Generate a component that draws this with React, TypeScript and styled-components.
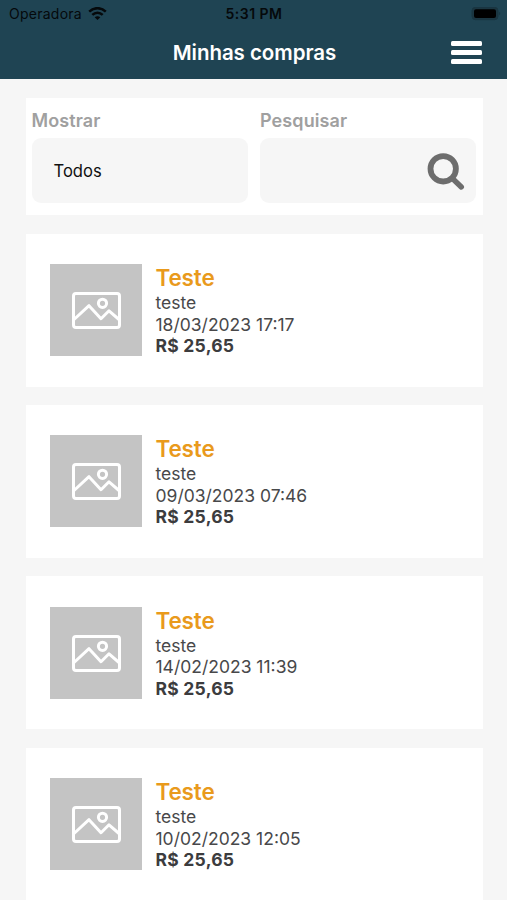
import React from "react";
import styled, { createGlobalStyle } from "styled-components";

const GlobalStyle = createGlobalStyle`
  * { box-sizing: border-box; }
  html, body { margin: 0; padding: 0; background: #f6f6f6; overflow: hidden; }
  body { font-family: Inter, "Liberation Sans", sans-serif; }
`;

const Screen = styled.div`
  width: 507px;
  height: 900px;
  overflow: hidden;
  background: #f6f6f6;
`;

const Header = styled.header`
  height: 79px;
  background: #1f4453;
`;

const StatusBar = styled.div`
  display: grid;
  grid-template-columns: 1fr auto 1fr;
  align-items: center;
  height: 27px;
  padding: 0 6px 0 9px;
  color: #05090b;
`;

const Carrier = styled.div`
  display: flex;
  align-items: center;
  gap: 6px;
  font-size: 14px;
  line-height: 27px;
  letter-spacing: 0.25px;
`;

const Clock = styled.div`
  margin-right: 2px;
  font-size: 14px;
  font-weight: 600;
  line-height: 27px;
  letter-spacing: 0.5px;
`;

const BatteryIcon = styled.svg`
  display: block;
  justify-self: end;
`;

const NavBar = styled.div`
  display: grid;
  grid-template-columns: 1fr auto 1fr;
  align-items: center;
  height: 50px;
  padding: 0 25px;
`;

const Title = styled.h1`
  grid-column: 2;
  margin: 0;
  padding-left: 2px;
  color: #fff;
  font-size: 20.5px;
  font-weight: 600;
  line-height: 51px;
  letter-spacing: -0.05px;
`;

const MenuButton = styled.button`
  display: flex;
  flex-direction: column;
  justify-self: end;
  gap: 4px;
  padding: 0;
  border: 0;
  background: none;
`;

const MenuLine = styled.span`
  width: 31px;
  height: 5px;
  border-radius: 1.5px;
  background: #fff;
`;

const Content = styled.main`
  display: flex;
  flex-direction: column;
  gap: 18.4px;
  padding: 19px 24px 0 25.5px;
`;

const Filters = styled.section`
  display: grid;
  grid-template-columns: 216px 216px;
  gap: 12.5px;
  flex: none;
  height: 117.2px;
  padding: 11px 6px 0;
  background: #fff;
`;

const Field = styled.div`
  display: flex;
  flex-direction: column;
`;

const Label = styled.label`
  height: 29px;
  color: #a0a0a0;
  font-size: 18px;
  font-weight: 600;
  line-height: 24px;
  letter-spacing: 0.1px;
`;

const Control = styled.div<{ $end?: boolean }>`
  display: flex;
  align-items: center;
  justify-content: ${(p) => (p.$end ? "flex-end" : "flex-start")};
  height: 65px;
  padding: 0 11.5px 0 22px;
  border-radius: 9px;
  background: #f6f6f6;
  color: #111;
  font-size: 16.6px;
`;

const Card = styled.article`
  display: flex;
  flex: none;
  gap: 13.5px;
  height: 153px;
  padding: 30.5px 24.5px;
  background: #fff;
`;

const Thumb = styled.div`
  display: flex;
  align-items: center;
  justify-content: center;
  width: 92px;
  height: 92px;
  background: #c4c4c4;
`;

const Details = styled.div`
  color: #48484a;
  font-size: 17.5px;
  line-height: 21.5px;
`;

const Name = styled.h2`
  margin: 0;
  color: #e99a1c;
  font-size: 22.5px;
  font-weight: 600;
  line-height: 28px;
  letter-spacing: -0.15px;
`;

const Line = styled.div``;

const Price = styled.div`
  color: #3c3c3e;
  font-weight: 700;
  letter-spacing: 0.25px;
`;

const purchases = [
  { name: "Teste", description: "teste", date: "18/03/2023 17:17", price: "R$ 25,65" },
  { name: "Teste", description: "teste", date: "09/03/2023 07:46", price: "R$ 25,65" },
  { name: "Teste", description: "teste", date: "14/02/2023 11:39", price: "R$ 25,65" },
  { name: "Teste", description: "teste", date: "10/02/2023 12:05", price: "R$ 25,65" },
];

const WifiIcon = () => (
  <svg width="19" height="14" viewBox="0 0 19 14" fill="none" stroke="#05090b" strokeWidth="2.5">
    <path d="M1.2 4.6C6 0 13 0 17.8 4.6" />
    <path d="M4.3 7.8c3-2.9 7.4-2.9 10.4 0" />
    <path d="M9.5 13.1 6.7 10.3c1.6-1.4 4-1.4 5.6 0z" fill="#05090b" stroke="none" />
  </svg>
);

const SearchIcon = () => (
  <svg width="38" height="38" viewBox="0 0 38 38" fill="none" stroke="#6d6d6d">
    <circle cx="16.2" cy="16.8" r="12.7" strokeWidth="5.8" />
    <path d="M26 27 34.3 35" strokeWidth="5.4" strokeLinecap="round" />
  </svg>
);

const PictureIcon = () => (
  <svg width="50" height="38" viewBox="0 0 50 38" fill="none" stroke="#fff" strokeWidth="3" strokeLinejoin="round">
    <rect x="2.5" y="2.5" width="46" height="34" rx="2.5" />
    <circle cx="31.5" cy="12.3" r="4.1" />
    <path d="M3 28.5 18 14.7 30 27.7 38 19.8 48 28.5" />
  </svg>
);

export default function App() {
  return (
    <>
      <GlobalStyle />
      <Screen>
        <Header>
          <StatusBar>
            <Carrier>
              Operadora
              <WifiIcon />
            </Carrier>
            <Clock>5:31 PM</Clock>
            <BatteryIcon width="30" height="14" viewBox="0 0 30 14">
              <rect x="1" y="0.3" width="26" height="12.4" rx="3.5" fill="#1b3641" stroke="#193541" />
              <rect x="3" y="2.3" width="22" height="8.6" rx="2" fill="#000" />
              <path d="M28.3 4.7c1.2.6 1.2 3 0 3.6z" fill="#17323d" />
            </BatteryIcon>
          </StatusBar>
          <NavBar>
            <Title>Minhas compras</Title>
            <MenuButton aria-label="Menu">
              <MenuLine />
              <MenuLine />
              <MenuLine />
            </MenuButton>
          </NavBar>
        </Header>
        <Content>
          <Filters>
            <Field>
              <Label>Mostrar</Label>
              <Control>Todos</Control>
            </Field>
            <Field>
              <Label>Pesquisar</Label>
              <Control $end>
                <SearchIcon />
              </Control>
            </Field>
          </Filters>
          {purchases.map((p) => (
            <Card key={p.date}>
              <Thumb>
                <PictureIcon />
              </Thumb>
              <Details>
                <Name>{p.name}</Name>
                <Line>{p.description}</Line>
                <Line>{p.date}</Line>
                <Price>{p.price}</Price>
              </Details>
            </Card>
          ))}
        </Content>
      </Screen>
    </>
  );
}
